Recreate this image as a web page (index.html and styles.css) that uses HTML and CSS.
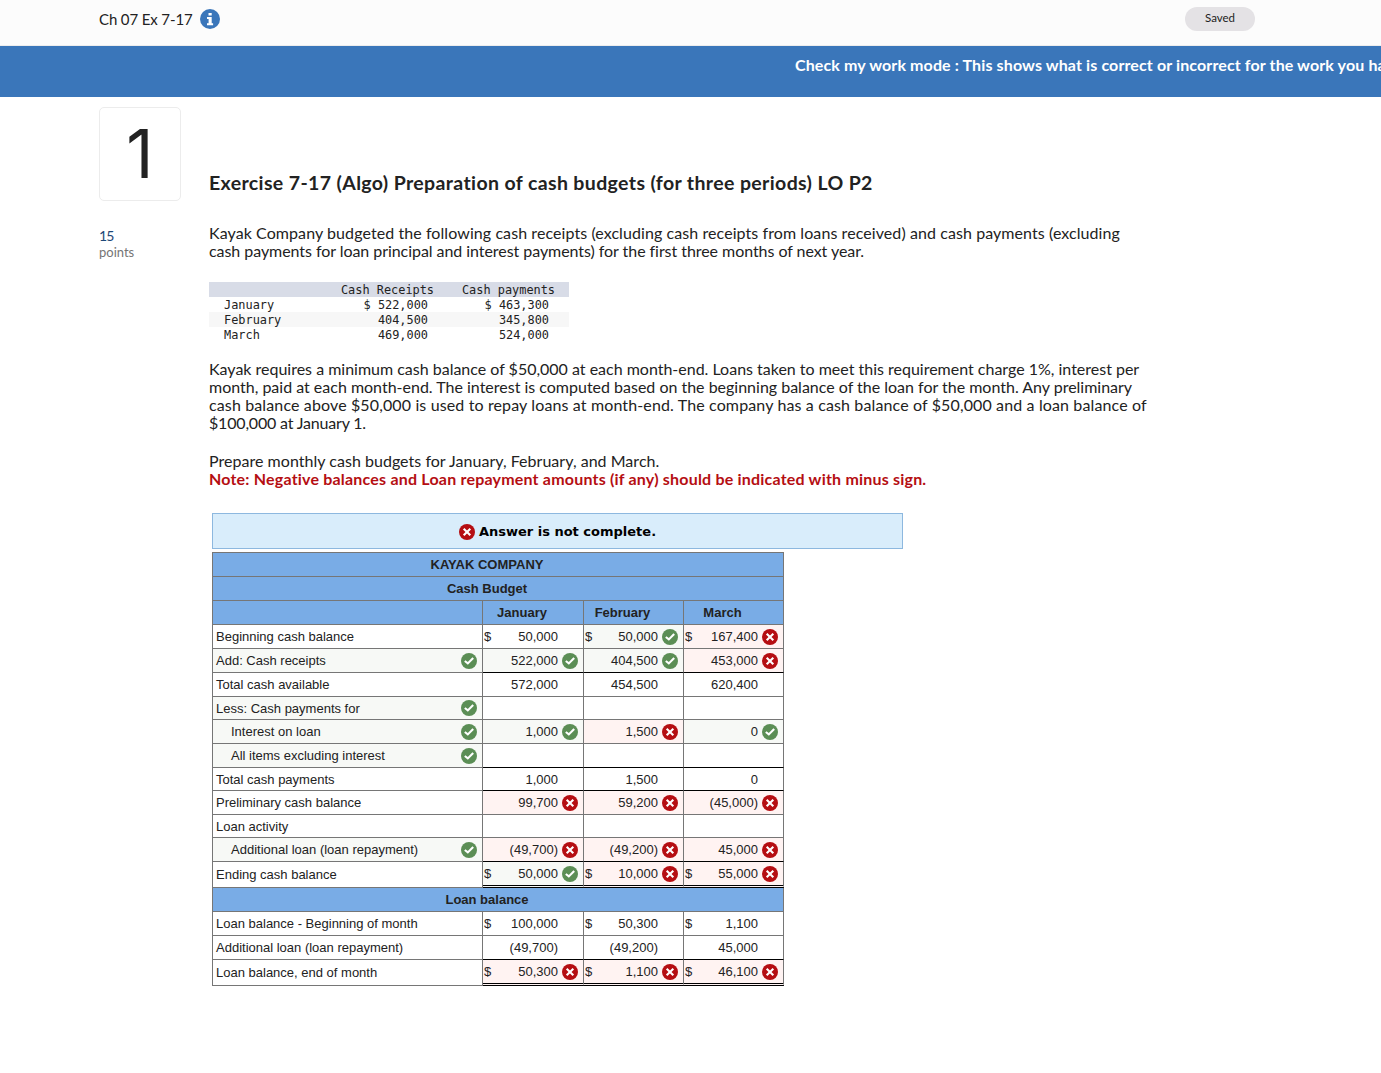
FILE: index.html
```html
<!DOCTYPE html>
<html lang="en">
    <head>
        <meta charset="utf-8">
        <title>Ch 07 Ex 7-17</title>
        <link rel="stylesheet" href="styles.css">
    </head>
    <body>
        <svg class="sprite">
            <symbol id="ok" viewBox="0 0 16 16">
                <circle cx="8" cy="8" r="8" fill="#5b8e55"/>
                <path d="M3.8 8 L6.8 10.4 L12.2 4.9" fill="none" stroke="#fff" stroke-width="2.1"/>
            </symbol>
            <symbol id="bad" viewBox="0 0 16 16">
                <circle cx="8" cy="8" r="8" fill="#b50e12"/>
                <path d="M4.7 4.7 L11.3 11.3 M11.3 4.7 L4.7 11.3" fill="none" stroke="#fff" stroke-width="2.1"/>
            </symbol>
        </svg>
        <header class="topbar">
            <span class="chapter">Ch 07 Ex 7-17</span>
            <svg class="info" viewBox="0 0 20 20">
                <circle cx="10" cy="10" r="10" fill="#3a76ba"/>
                <path d="M8.5 4h3.2v2.6H8.5z M7 8h4.7v6.2h1.4v2H7v-2h1.6V10H7z" fill="#fff"/>
            </svg>
            <span class="saved">Saved</span>
        </header>
        <div class="mode">Check my work mode : This shows what is correct or incorrect for the work you have</div>
        <div class="page">
            <aside>
                <div class="number">1</div>
                <div class="score">15</div>
                <div class="points">points</div>
            </aside>
            <main>
                <h1>Exercise 7-17 (Algo) Preparation of cash budgets (for three periods) LO P2</h1>
                <p class="intro"><span class="l1">Kayak Company budgeted the following cash receipts (excluding cash receipts from loans received) and cash payments (excluding</span><br><span class="l2">cash payments for loan principal and interest payments) for the first three months of next year.</span></p>
                <table class="given">
                    <tr><th></th><th>Cash Receipts</th><th>Cash payments</th></tr>
                    <tr><td>January</td><td>$ 522,000</td><td>$ 463,300</td></tr>
                    <tr><td>February</td><td>404,500</td><td>345,800</td></tr>
                    <tr><td>March</td><td>469,000</td><td>524,000</td></tr>
                </table>
                <p class="terms"><span class="l3">Kayak requires a minimum cash balance of $50,000 at each month-end. Loans taken to meet this requirement charge 1%, interest per</span><br><span class="l3">month, paid at each month-end. The interest is computed based on the beginning balance of the loan for the month. Any preliminary</span><br><span class="l4">cash balance above $50,000 is used to repay loans at month-end. The company has a cash balance of $50,000 and a loan balance of</span><br><span class="l5">$100,000 at January 1.</span></p>
                <p class="task"><span class="l6">Prepare monthly cash budgets for January, February, and March.</span><br><b>Note: Negative balances and Loan repayment amounts (if any) should be indicated with minus sign.</b></p>
                <div class="result"><svg class="icon"><use href="#bad"/></svg><span>Answer is not complete.</span></div>
                <table class="budget">
                    <colgroup><col class="c1"><col class="c2"><col class="c3"><col class="c3"></colgroup>
                    <tr><th colspan="4">KAYAK COMPANY</th></tr>
                    <tr><th colspan="4">Cash Budget</th></tr>
                    <tr><th></th><th>January</th><th>February</th><th>March</th></tr>
                    <tr>
                        <td>Beginning cash balance</td>
                        <td><div><i>$</i>50,000</div></td>
                        <td class="right"><div><i>$</i>50,000<svg class="icon"><use href="#ok"/></svg></div></td>
                        <td class="wrong"><div><i>$</i>167,400<svg class="icon"><use href="#bad"/></svg></div></td>
                    </tr>
                    <tr class="sum">
                        <td class="right"><div>Add: Cash receipts<svg class="icon"><use href="#ok"/></svg></div></td>
                        <td class="right"><div>522,000<svg class="icon"><use href="#ok"/></svg></div></td>
                        <td class="right"><div>404,500<svg class="icon"><use href="#ok"/></svg></div></td>
                        <td class="wrong"><div>453,000<svg class="icon"><use href="#bad"/></svg></div></td>
                    </tr>
                    <tr>
                        <td>Total cash available</td>
                        <td><div>572,000</div></td>
                        <td><div>454,500</div></td>
                        <td><div>620,400</div></td>
                    </tr>
                    <tr class="short">
                        <td class="right"><div>Less: Cash payments for<svg class="icon"><use href="#ok"/></svg></div></td>
                        <td></td><td></td><td></td>
                    </tr>
                    <tr>
                        <td class="right sub"><div>Interest on loan<svg class="icon"><use href="#ok"/></svg></div></td>
                        <td class="right"><div>1,000<svg class="icon"><use href="#ok"/></svg></div></td>
                        <td class="wrong"><div>1,500<svg class="icon"><use href="#bad"/></svg></div></td>
                        <td class="right"><div>0<svg class="icon"><use href="#ok"/></svg></div></td>
                    </tr>
                    <tr class="sum">
                        <td class="right sub"><div>All items excluding interest<svg class="icon"><use href="#ok"/></svg></div></td>
                        <td></td><td></td><td></td>
                    </tr>
                    <tr class="sum short">
                        <td>Total cash payments</td>
                        <td><div>1,000</div></td>
                        <td><div>1,500</div></td>
                        <td><div>0</div></td>
                    </tr>
                    <tr>
                        <td>Preliminary cash balance</td>
                        <td class="wrong"><div>99,700<svg class="icon"><use href="#bad"/></svg></div></td>
                        <td class="wrong"><div>59,200<svg class="icon"><use href="#bad"/></svg></div></td>
                        <td class="wrong"><div>(45,000)<svg class="icon"><use href="#bad"/></svg></div></td>
                    </tr>
                    <tr class="short">
                        <td>Loan activity</td>
                        <td></td><td></td><td></td>
                    </tr>
                    <tr class="sum">
                        <td class="right sub"><div>Additional loan (loan repayment)<svg class="icon"><use href="#ok"/></svg></div></td>
                        <td class="wrong"><div>(49,700)<svg class="icon"><use href="#bad"/></svg></div></td>
                        <td class="wrong"><div>(49,200)<svg class="icon"><use href="#bad"/></svg></div></td>
                        <td class="wrong"><div>45,000<svg class="icon"><use href="#bad"/></svg></div></td>
                    </tr>
                    <tr class="total">
                        <td>Ending cash balance</td>
                        <td class="right"><div><i>$</i>50,000<svg class="icon"><use href="#ok"/></svg></div></td>
                        <td class="wrong"><div><i>$</i>10,000<svg class="icon"><use href="#bad"/></svg></div></td>
                        <td class="wrong"><div><i>$</i>55,000<svg class="icon"><use href="#bad"/></svg></div></td>
                    </tr>
                    <tr><th colspan="4">Loan balance</th></tr>
                    <tr>
                        <td>Loan balance - Beginning of month</td>
                        <td><div><i>$</i>100,000</div></td>
                        <td><div><i>$</i>50,300</div></td>
                        <td><div><i>$</i>1,100</div></td>
                    </tr>
                    <tr class="sum">
                        <td>Additional loan (loan repayment)</td>
                        <td><div>(49,700)</div></td>
                        <td><div>(49,200)</div></td>
                        <td><div>45,000</div></td>
                    </tr>
                    <tr class="total">
                        <td>Loan balance, end of month</td>
                        <td class="wrong"><div><i>$</i>50,300<svg class="icon"><use href="#bad"/></svg></div></td>
                        <td class="wrong"><div><i>$</i>1,100<svg class="icon"><use href="#bad"/></svg></div></td>
                        <td class="wrong"><div><i>$</i>46,100<svg class="icon"><use href="#bad"/></svg></div></td>
                    </tr>
                </table>
            </main>
        </div>
    </body>
</html>
```
FILE: styles.css
```css
*
{
    box-sizing: border-box;
}
body
{
    margin: 0;
    background: #fff;
    color: #222;
    font-family: Lato, sans-serif;
    font-size: 16px;
    line-height: 18px;
    font-variant-ligatures: none;
    overflow: hidden;
}
.sprite
{
    display: none;
}
.icon
{
    width: 16px;
    height: 16px;
    flex: none;
}
.topbar
{
    display: flex;
    align-items: flex-start;
    height: 46px;
    padding: 7px 126px 0 99px;
    background: #fcfcfc;
    border-bottom: 1px solid #ededed;
}
.chapter
{
    width: 94px;
    padding-top: 3px;
    font-size: 15px;
    letter-spacing: -0.12px;
    white-space: nowrap;
}
.info
{
    width: 20px;
    height: 20px;
    margin: 2px 0 0 7px;
}
.saved
{
    width: 70px;
    height: 24px;
    margin-left: auto;
    border-radius: 12px;
    background: #e4e2e5;
    font-size: 11.5px;
    line-height: 22px;
    text-align: center;
}
.mode
{
    height: 51px;
    padding: 10px 0 0 795px;
    background: #3a76ba;
    color: #fff;
    font-weight: bold;
    letter-spacing: 0.12px;
    white-space: nowrap;
    overflow: hidden;
}
.page
{
    display: flex;
    padding-left: 99px;
}
aside
{
    width: 110px;
    padding-top: 10px;
}
.number
{
    width: 82px;
    height: 94px;
    border: 1px solid #ececec;
    border-radius: 5px;
    font: 67px/92px Inter, sans-serif;
    text-align: center;
}
.score
{
    margin-top: 26px;
    color: #1d4878;
    font-size: 14px;
    letter-spacing: -0.9px;
}
.points
{
    color: #757575;
    font-size: 13px;
    line-height: 14px;
}
main
{
    white-space: nowrap;
}
h1
{
    margin: 76px 0 0;
    font-size: 19.5px;
    line-height: 20px;
    letter-spacing: 0.37px;
}
p
{
    margin: 0;
}
.intro
{
    margin-top: 31px;
}
.l1
{
    letter-spacing: 0.08px;
}
.l2
{
    letter-spacing: -0.055px;
}
.l3
{
    letter-spacing: -0.005px;
}
.l4
{
    letter-spacing: 0.13px;
}
.l5
{
    letter-spacing: -0.18px;
}
.l6
{
    letter-spacing: 0.03px;
}
.given
{
    width: 360px;
    margin: 22px 0 18px;
    table-layout: fixed;
    border-collapse: collapse;
    font: 11.9px/14px "DejaVu Sans Mono", monospace;
}
.given th, .given td
{
    height: 15px;
    padding: 1px 0 0;
    font-weight: normal;
}
.given th
{
    background: #d8dce7;
}
.given th:first-child
{
    width: 118px;
}
.given td
{
    padding-right: 20px;
    text-align: right;
}
.given td:first-child
{
    padding: 1px 0 0 15px;
    text-align: left;
}
.given tr:nth-child(3)
{
    background: #f7f7f7;
}
.task
{
    margin-top: 20px;
}
.task b
{
    color: #b50e12;
    letter-spacing: 0.2px;
}
.result
{
    display: flex;
    align-items: center;
    justify-content: center;
    gap: 4px;
    width: 691px;
    height: 36px;
    margin: 25px 0 3px 3px;
    padding-top: 2px;
    border: 1px solid #8db8df;
    background: #d9edfb;
    color: #000;
    font: bold 13px/16px "DejaVu Sans", sans-serif;
}
.budget
{
    width: 572px;
    margin-left: 3px;
    table-layout: fixed;
    border-collapse: separate;
    border-spacing: 0;
    border: solid #767676;
    border-width: 1px 0 0 1px;
    font: 13px/16px "Liberation Sans", sans-serif;
}
.c1
{
    width: 270px;
}
.c2
{
    width: 101px;
}
.c3
{
    width: 100px;
}
.budget th, .budget td
{
    height: 24px;
    padding: 0 5px 0 3px;
    border: solid #767676;
    border-width: 0 1px 1px 0;
}
.budget th
{
    padding: 0 22px 0 0;
    background: #79ace6;
}
.budget td + td
{
    padding-left: 1px;
}
.budget td div
{
    display: flex;
    align-items: center;
    justify-content: space-between;
}
.budget td + td div
{
    justify-content: flex-end;
    padding-right: 20px;
}
.budget td.right div, .budget td.wrong div
{
    padding-right: 0;
}
.budget .icon
{
    margin-left: 4px;
}
.budget i
{
    margin-right: auto;
    font-style: normal;
}
.budget .sub
{
    padding-left: 18px;
}
.budget .right
{
    background: #f7f9f6;
}
.budget .wrong
{
    background: #fff3f2;
}
.budget .short td
{
    height: 23px;
    padding-top: 2px;
}
.budget .short .icon
{
    margin-top: -2px;
}
.budget .sum td + td
{
    border-bottom-color: #000;
}
.budget .total td
{
    height: 26px;
}
.budget .total td + td
{
    border-bottom: 3px double #000;
}
```
